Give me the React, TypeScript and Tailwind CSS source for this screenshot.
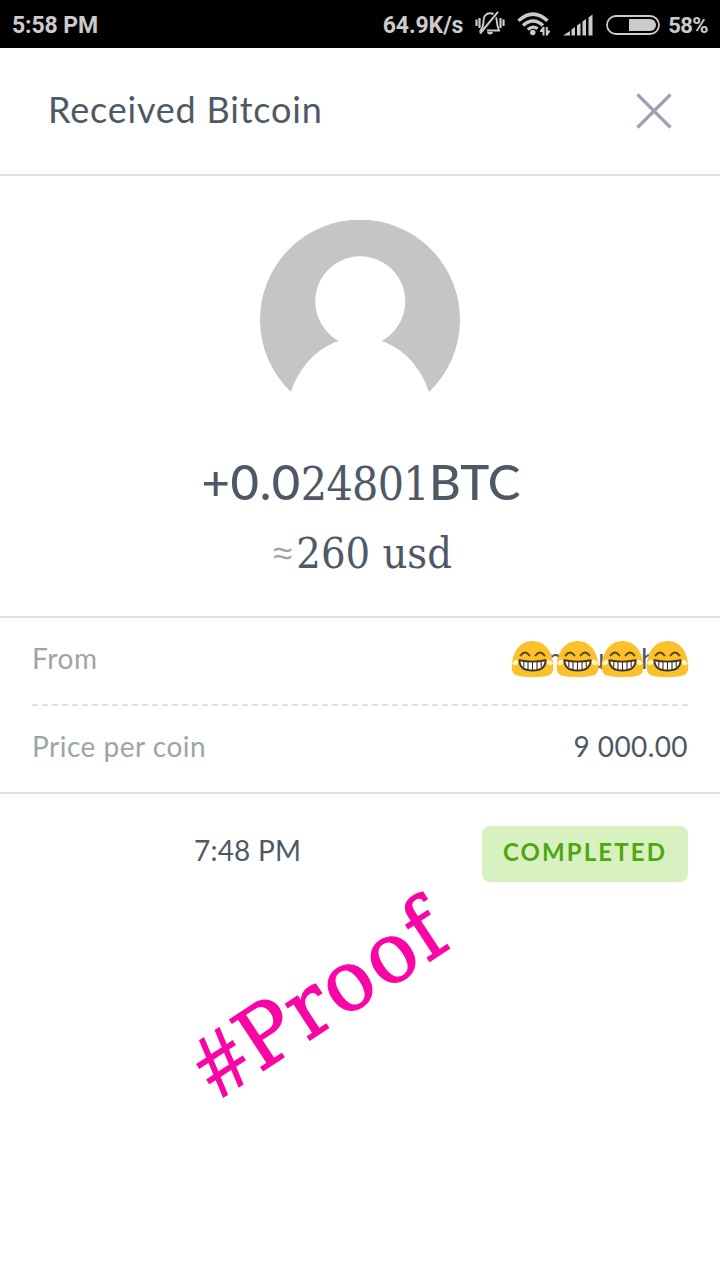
import { FC } from "react";

const LaughEmoji: FC = () => (
  <svg width="43" height="38" viewBox="0 0 43 38">
    <path
      d="M21.500 1C10 1 2.800 10 1 22C-.2 31 2 34 6 35.500C10 36.800 15 37 21.500 37S33 36.800 37 35.500C41 34 43.200 31 42 22C40.200 10 33 1 21.500 1Z"
      fill="#fbc02a"
    />
    <path
      d="M8.300 20.500C5.500 19 1.800 20 1.200 23.500C2.800 26.500 7.500 25.500 8.300 20.500ZM34.700 20.500C37.500 19 41.200 20 41.800 23.500C40.200 26.500 35.500 25.500 34.700 20.500Z"
      fill="#fff3b8"
    />
    <path
      d="M9.500 15.500Q14 9.500 18.500 15.500M24.500 15.500Q29 9.500 33.500 15.500"
      fill="none"
      stroke="#5b4520"
      strokeWidth="1.900"
      strokeLinecap="round"
    />
    <path
      d="M8.300 20.200Q21.500 23 34.700 20.200C34.500 27.500 29 30.500 21.500 30.500S8.500 27.500 8.300 20.200Z"
      fill="#fff"
      stroke="#3f3424"
      strokeWidth="1.900"
      strokeLinejoin="round"
    />
    <path
      d="M12.800 21.500V27M17 22V30M21.500 22V30.500M26 22V30M30.200 21.500V27"
      stroke="#3f3424"
      strokeWidth="1.100"
    />
  </svg>
);

const VibrateIcon: FC = () => (
  <svg width="30" height="26" viewBox="0 0 30 26" fill="none" stroke="#cbcbcb">
    <path d="M1.500 8.500V15M4.500 7V17M25.500 7V17M28.500 8.500V15" strokeWidth="2.200" />
    <path
      d="M21 6.500C22.300 9.500 21.800 13 22.700 15.500L24 19.500H12M18.500 3.300C17.500 2.300 16.500 2.200 15 2.200C11 2.200 8.500 5.500 8.500 9.500C8.500 13 8 16.500 5.500 19.500H8.500"
      strokeWidth="1.900"
    />
    <path d="M5 22.500L23 .8" strokeWidth="2" />
    <path d="M12 21H18Q17.500 23.500 15 23.500T12 21Z" fill="#cbcbcb" stroke="none" />
  </svg>
);

const WifiIcon: FC = () => (
  <svg width="34" height="24" viewBox="0 0 34 24" fill="none" stroke="#cbcbcb">
    <path d="M1.500 8.800Q16 -4.500 30.500 8.800" strokeWidth="3.400" />
    <path d="M6 13.500Q16 4.500 26 13.500" strokeWidth="3.400" />
    <path d="M10.800 17.600Q16 13 20.500 16.800" strokeWidth="3.200" />
    <circle cx="15.800" cy="20.500" r="2.700" fill="#cbcbcb" stroke="none" />
    <path d="M26.500 15V23.500M29.800 15V23.500" strokeWidth="2" />
    <path d="M26.500 14.500L23 18.500V20H26.500ZM29.800 24L33 20V18.500H29.800Z" fill="#cbcbcb" stroke="none" />
  </svg>
);

const SignalIcon: FC = () => (
  <svg width="31" height="22" viewBox="0 0 31 22" fill="#cbcbcb">
    <path d="M0 21.500L7 17V21.500ZM8.500 15.500L12 13V21.500H8.500ZM14 11.500L17.500 9V21.500H14ZM19.500 7.500L23 5V21.500H19.500ZM25.500 3.500L29.500 .5V21.500H25.500Z" />
  </svg>
);

const BatteryIcon: FC = () => (
  <svg width="54" height="20" viewBox="0 0 54 20">
    <rect x="1" y="1" width="52" height="18" rx="9" fill="none" stroke="#cbcbcb" strokeWidth="1.800" />
    <path d="M23 4H44A6 6 0 0 1 44 16H23Z" fill="#cbcbcb" />
  </svg>
);

const StatusBar: FC = () => (
  <div className="h-12 shrink-0 bg-black text-[#cbcbcb] flex items-center justify-between px-3 pt-[2px] font-['Roboto',sans-serif] font-bold text-[23px] whitespace-nowrap">
    <span className="pt-[2px] tracking-[-0.1px]">5:58 PM</span>
    <div className="flex items-center">
      <span className="mr-3 pt-[2px] tracking-[-0.1px]">64.9K/s</span>
      <span className="-mt-[2px]"><VibrateIcon /></span>
      <span className="ml-3 mr-3 -mt-[2px]"><WifiIcon /></span>
      <span><SignalIcon /></span>
      <span className="ml-3 mr-2"><BatteryIcon /></span>
      <span className="text-[22px] tracking-[-0.6px]">58%</span>
    </div>
  </div>
);

const Avatar: FC = () => (
  <svg width="200" height="174" viewBox="0 0 200 174">
    <path
      d="M31 172A100 100 0 1 1 169 172C160.500 146 142 127.500 121.500 121A45 45 0 1 0 79 121C58 127.500 39.500 146 31 172Z"
      fill="#c5c5c5"
    />
  </svg>
);

export default function App() {
  return (
    <div className="relative w-[720px] h-[1280px] overflow-hidden bg-white flex flex-col font-['Lato',sans-serif] text-[#4f5966]">
      <StatusBar />
      <header className="h-32 shrink-0 border-b-2 border-[#dde0e2] flex items-center justify-between pl-12 pr-12">
        <h1 className="text-[36px] tracking-[0.8px] whitespace-nowrap pb-[5px]">Received Bitcoin</h1>
        <svg width="36" height="36" viewBox="0 0 36 36" stroke="#9ca3ae" strokeWidth="3.200">
          <path d="M1.500 1.500L34.500 34.500M34.500 1.500L1.500 34.500" />
        </svg>
      </header>

      <section className="h-[442px] shrink-0 border-b-2 border-[#dde0e2] flex flex-col items-center pt-11">
        <Avatar />
        <div className="mt-[59px] h-16 flex items-baseline whitespace-nowrap text-[49px] leading-[56px] pl-[2px]">
          <span className="font-medium tracking-[0.6px]">+0.0</span>
          <span className="font-['DejaVu_Serif_Condensed','DejaVu_Serif',serif] text-[46px] tracking-[-0.7px]">24801</span>
          <span className="font-medium">BTC</span>
        </div>
        <div className="mt-2 pl-[5px] flex items-center whitespace-nowrap leading-[56px]">
          <span className="font-['Liberation_Sans',sans-serif] text-[35px] text-[#9ca5a8] mr-1">≈</span>
          <span className="font-['DejaVu_Serif_Condensed','DejaVu_Serif',serif] text-[43px]">260 usd</span>
        </div>
      </section>

      <section className="h-44 shrink-0 border-b-2 border-[#dde0e2] px-8 text-[28px]">
        <div className="h-[88px] border-b-2 border-dashed border-[#dde0e2] flex justify-between items-center pb-1">
          <span className="text-[#9ca5a8] tracking-[0.6px] pb-[2px]">From</span>
          <div className="relative w-[177px] h-[38px]">
            <span className="absolute left-[36px] -top-[3px]">n</span>
            <span className="absolute left-[78px] -top-[3px]">u</span>
            <span className="absolute left-[130px] -top-[3px]">h</span>
            <div className="absolute inset-0 flex gap-[2px] -mr-1">
              {[0, 1, 2, 3].map((idx) => (
                <LaughEmoji key={idx} />
              ))}
            </div>
          </div>
        </div>
        <div className="h-[86px] flex justify-between items-center pb-[6px]">
          <span className="text-[#9ca5a8] tracking-[0.5px]">Price per coin</span>
          <span className="tracking-[0.4px]">9 000.00</span>
        </div>
      </section>

      <section className="pl-[194px] pr-8 pt-8 flex justify-between items-start">
        <span className="text-[28px] leading-[48px] tracking-[0.2px]">7:48 PM</span>
        <span className="w-[206px] h-14 rounded-lg bg-[#d7f2c0] text-[#4fa60f] text-center font-bold text-[24px] leading-[52px] tracking-[2.100px]">
          COMPLETED
        </span>
      </section>

      <div className="absolute left-[219px] top-[1021px] origin-[0_80px] -rotate-[33.3deg] flex items-baseline whitespace-nowrap leading-[96px] text-[#fa05a5] [-webkit-text-stroke:1.200px_#fa05a5]">
        <span className="font-['Liberation_Serif',serif] text-[92px] mr-[3px]">#</span>
        <span className="inline-block origin-left scale-x-[1.08] font-['DejaVu_Serif_Condensed','DejaVu_Serif',serif] text-[84px] tracking-[2px]">
          Proof
        </span>
      </div>
    </div>
  );
}
